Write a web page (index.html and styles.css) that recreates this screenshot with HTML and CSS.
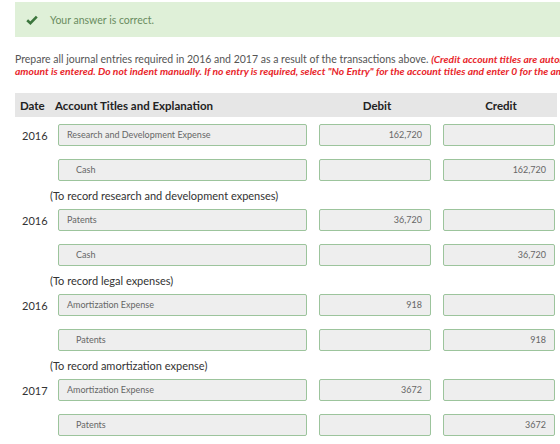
FILE: index.html
```html
<!DOCTYPE html>
<html lang="en">
<head>
    <meta charset="UTF-8">
    <meta name="viewport" content="width=device-width, initial-scale=1.0">
    <title>Journal Entries</title>
    <link rel="stylesheet" href="styles.css">
</head>
<body>

    <div class="page">
        <div class="alert">
            <svg class="check" width="12" height="10" viewBox="0 0 12 10">
                <path d="M1.2 5.2 L4.4 8.2 L10.8 1.6" fill="none" stroke="#3c763d" stroke-width="2.6"/>
            </svg>
            <span>Your answer is correct.</span>
        </div>

        <p class="instructions">
            Prepare all journal entries required in 2016 and 2017 as a result of the transactions above.
            <em class="note">(Credit account titles are automatically indented when<br>amount is entered. Do not indent manually. If no entry is required, select "No Entry" for the account titles and enter 0 for the amounts.)</em>
        </p>

        <div class="journal">
            <div class="journal-head">
                <div class="col-date">Date</div>
                <div class="col-account">Account Titles and Explanation</div>
                <div class="col-num">Debit</div>
                <div class="col-num">Credit</div>
            </div>

            <!-- entry 1 -->
            <div class="entry">
                <div class="line">
                    <div class="date">2016</div>
                    <div class="field">Research and Development Expense</div>
                    <div class="field amount">162,720</div>
                    <div class="field amount"></div>
                </div>
                <div class="line">
                    <div class="date"></div>
                    <div class="field indent">Cash</div>
                    <div class="field amount"></div>
                    <div class="field amount">162,720</div>
                </div>
                <p class="explain">(To record research and development expenses)</p>
            </div>

            <!-- entry 2 -->
            <div class="entry">
                <div class="line">
                    <div class="date">2016</div>
                    <div class="field">Patents</div>
                    <div class="field amount">36,720</div>
                    <div class="field amount"></div>
                </div>
                <div class="line">
                    <div class="date"></div>
                    <div class="field indent">Cash</div>
                    <div class="field amount"></div>
                    <div class="field amount">36,720</div>
                </div>
                <p class="explain">(To record legal expenses)</p>
            </div>

            <!-- entry 3 -->
            <div class="entry">
                <div class="line">
                    <div class="date">2016</div>
                    <div class="field">Amortization Expense</div>
                    <div class="field amount">918</div>
                    <div class="field amount"></div>
                </div>
                <div class="line">
                    <div class="date"></div>
                    <div class="field indent">Patents</div>
                    <div class="field amount"></div>
                    <div class="field amount">918</div>
                </div>
                <p class="explain">(To record amortization expense)</p>
            </div>

            <!-- entry 4 -->
            <div class="entry">
                <div class="line">
                    <div class="date">2017</div>
                    <div class="field">Amortization Expense</div>
                    <div class="field amount">3672</div>
                    <div class="field amount"></div>
                </div>
                <div class="line">
                    <div class="date"></div>
                    <div class="field indent">Patents</div>
                    <div class="field amount"></div>
                    <div class="field amount">3672</div>
                </div>
            </div>
        </div>
    </div>

</body>
</html>
```

FILE: styles.css
```css
body {
    margin: 0;
    padding: 0;
    background-color: white;
    font-family: Lato, "Open Sans", sans-serif;
    overflow: hidden;
}
.page {
    width: 640px;
    padding-left: 15px;
    padding-top: 2px;
}
.alert {
    display: flex;
    align-items: center;
    height: 35px;
    padding-left: 11px;
    background-color: #dff0d8;
    color: #6a8c5f;
    font-size: 10.5px;
}
.check {
    margin-right: 12px;
}
.instructions {
    margin: 16px 0 16px 0;
    font-size: 10.5px;
    line-height: 12px;
    color: #555;
    white-space: nowrap;
}
.note {
    color: #e8262b;
    font-weight: bold;
    font-size: 10.3px;
}
.journal {
    width: 542px;
}
.journal-head {
    display: grid;
    grid-template-columns: 31px 249px 112px 112px;
    column-gap: 12px;
    align-items: center;
    height: 24px;
    margin-bottom: 7px;
    background-color: #e6e6e6;
    font-size: 11.5px;
    font-weight: bold;
    color: #222;
}
.col-date {
    padding-left: 5px;
}
.col-account {
    margin-left: -3px;
}
.col-num {
    text-align: center;
    padding-left: 4px;
}
.entry {
    margin-bottom: 5px;
}
.line {
    display: grid;
    grid-template-columns: 31px 249px 112px 112px;
    column-gap: 12px;
    align-items: center;
    margin-bottom: 13px;
}
.line:nth-of-type(2) {
    margin-bottom: 0;
}
.date {
    padding-left: 7px;
    font-size: 11px;
    color: #333;
}
.field {
    box-sizing: border-box;
    height: 22px;
    line-height: 20px;
    padding: 0 8px;
    background-color: #eeeeee;
    border: 1px solid #9cc49c;
    border-radius: 2px;
    font-size: 9px;
    color: #666;
    overflow: hidden;
    white-space: nowrap;
}
.field.indent {
    padding-left: 17px;
}
.field.amount {
    text-align: right;
}
.explain {
    margin: 7px 0 0 35px;
    font-size: 11px;
    line-height: 16px;
    color: #333;
}
```
